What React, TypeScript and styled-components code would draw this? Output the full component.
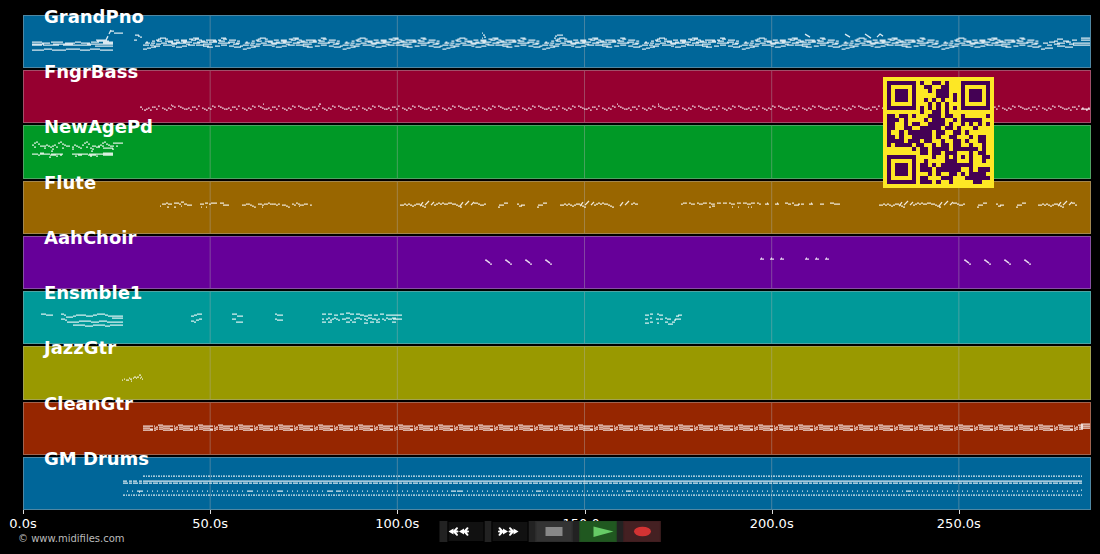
import React from 'react';
import styled, { createGlobalStyle } from 'styled-components';

const GlobalStyle = createGlobalStyle`
  * { box-sizing: border-box; }
  body { margin: 0; background: #000; color: #fff; font-family: "DejaVu Sans", sans-serif; }
`;

/* ---------- note data ---------- */

const DURATION = 285.3;
const WIDTH = 1068;
const HEIGHT = 53;

/** One dash per character: a base-36 digit is the pitch offset below `y`, "-" is a rest. */
const voice = (x: number, y: number, notes: string, step = 2, len = step): string => {
  let d = '';
  for (let i = 0; i < notes.length; i++) {
    const c = notes[i];
    if (c === '-') continue;
    d += `M${x + i * step} ${y + parseInt(c, 36)}h${len}`;
  }
  return d;
};

/** Held notes written as "x y length". */
const held = (list: string, dx = 0): string =>
  list
    .split(',')
    .map((s) => {
      const [x, y, w] = s.trim().split(' ').map(Number);
      return `M${x + dx} ${y}h${w}`;
    })
    .join('');

const repeat = (from: number, to: number, period: number, part: (x: number) => string): string => {
  let d = '';
  for (let x = from; x < to - 0.5; x += period) d += part(x);
  return d;
};

const grandLow = 'cbb-99aa8899-aa88a9988-bb';
const grandBar = (x: number) =>
  held('0 34 4,4 33 4,8 32 5,11 31 6,20 30 9,29 31 3,33 32 6,39 31 5,45 30 7,53 30 8,60 31 6,64 32 6,72 31 5,78 30 6,86 31 5,91 32 7,97 31 3', x) +
  held('2 28 5,8 28 4,14 26 5,18 28 6,25 27 5,29 29 5,36 28 7,45 27 4,50 28 7,59 27 6,64 29 5,70 27 4,75 28 8,85 27 5,90 29 6', x) +
  held('0 30 6,7 30 4,13 29 5,22 26 6,28 28 8,38 26 6,43 29 4,48 25 5,54 27 5,60 29 6,66 27 8,76 26 6,82 28 5,88 27 4,93 28 4', x) +
  held('3 27 2,9 26 3,13 25 3,15 24 3,17 23 6,22 24 3,26 26 4,31 25 5,38 25 6,46 24 4,50 23 6,52 24 4,58 26 4,63 25 5,70 26 4,75 25 3,78 23 5,80 24 4,86 25 6,94 26 3', x) +
  held('33 27 4,40 27 5,56 25 3,68 25 5,91 25 2', x);

const grandPno =
  held('9 27 10,19 28 8,28 27 12,42 28 10,52 27 6,58 28 9,68 27 8,74 26 12,80 28 10,9 29 12,20 30 10,30 29 20,50 30 14,64 29 26,9 30 10,22 30 14,40 30 10,56 30 12,72 31 18,9 35 12,21 34 8,29 35 14,43 34 14,57 35 10,67 34 10,77 35 13') +
  held('73 25 11,80 27 10') +
  'M83 25l2-4M86 19l2-4M88 16h3' +
  held('91 18 9,111 25 3,112 20 4,115 21 2,117 22 2') +
  repeat(120, 1018, 99.8, grandBar) +
  voice(1018, 22, grandLow.slice(0, 10), 4, 4) +
  held('1020 28 5,1026 27 6,1034 28 8,1043 27 5,1050 28 8,1031 26 4,1034 24 6,1040 26 6,1049 25 5,1024 30 5,1031 29 6,1046 29 5') +
  held('1058 23 10,1058 25 10,1058 28 10,1058 30 10') +
  held('459 18 1,460 20 2,461 22 2,459 23 1,531 23 2,532 21 2,534 20 6') +
  'M782 19l5 3M822 19l5 3M842 19l6 4M854 22l3-3l3 2';

const bassBar = '3241130-2342301-0123';
const fngrBass =
  held('117 37 2,119 39 1,121 40 2') +
  repeat(123, 1057, 40, (x) => voice(x, 36, bassBar, 2, 1.7)) +
  held('148 35 1,240 34 1,296 34 2,594 34 1,635 34 1,1058 39 10');

const newAgePd =
  voice(9, 17, '3102-4434543-1023-4-5345-3102-44543102344-4', 2) +
  voice(9, 17, '-5--4-6--57-5--6-4--7--56--5-67--5-4-6--7', 2) +
  voice(9, 27, '222311222333423-----22233222333342222', 2) +
  held('9 29 5,17 29 8,28 29 12,50 29 12,66 29 10,80 28 10,80 29 10,80 30 10,80 23 10,90 18 10,26 32 2,52 31 2,67 31 2,28 26 2,68 26 2');

/* A full phrase: two runs of leaps joined by a murmuring middle part. */
const fluteHead = (x: number) =>
  voice(x, 22, '2212123211234', 2) + `M${x + 20} 25l3-4M${x + 25} 24l4-4M${x + 31} 24l3-3`;
const fluteLong = (x: number) =>
  fluteHead(x) +
  voice(x + 34, 21, '32121221122345', 2) +
  `M${x + 60} 25l3-4M${x + 65} 24l4-4M${x + 71} 24l3-3` +
  voice(x + 74, 21, '112332', 2);
const fluteShort = (x: number) =>
  fluteHead(x) + voice(x + 34, 21, '3212122345', 2) + `M${x + 60} 25l3-4M${x + 65} 24l4-4` + held('71 23 2,73 22 2,75 23 3', x);
const fluteTail = (x: number) => held('0 26 2,1 24 3,4 24 2,6 22 4', x);
const fluteDrop = (x: number) => held('0 23 2,2 25 3,4 24 4', x);
const flute =
  held('137 25 1,139 23 4,143 22 2,145 23 4,151 22 5,156 23 2,158 21 3,161 23 3,164 24 5,144 26 2,151 26 2,158 25 1') +
  held('177 23 4,182 22 3,186 23 2,188 22 6,178 26 1,183 26 1,197 22 4,200 24 6') +
  voice(219, 22, '2211234-11211011121-2234-12012211-2', 2, 1.9) +
  held('239 26 1,276 25 1') +
  fluteLong(377) +
  fluteTail(475) +
  fluteDrop(494) +
  fluteTail(514) +
  fluteShort(537) +
  voice(658, 21, '211-122-12211-122-11-11-122-11-112211-12', 2, 1.9) +
  held('686 26 2,689 25 3,709 26 1,715 26 1,725 26 1,728 26 1') +
  held('742 23 4,744 22 1,752 23 4,754 22 1,762 22 3,765 23 3,769 22 2,771 24 5,775 23 2,778 23 3,786 23 4,788 22 1,797 23 4,807 22 4,811 23 6') +
  fluteLong(856) +
  fluteTail(954) +
  fluteDrop(973) +
  fluteTail(993) +
  fluteHead(1015) +
  held('1049 22 3,1052 24 2');

const choirFall = (x: number) => held('0 24 2,5 28 2', x) + `M${x + 1} 24l4 3`;
const choirStep = (x: number) => held('0 23 4,1 22 1', x);
const aahChoir =
  [462, 482, 502, 522, 941, 961, 981, 1001].map(choirFall).join('') +
  [737, 747, 757, 782, 792, 802].map(choirStep).join('');

const ensemble =
  held('18 23 5,23 24 7') +
  held('38 23 3,41 24 2,43 26 7,50 25 3,53 24 10,63 25 7,70 24 4,74 23 8,82 24 3,85 25 15,89 27 11') +
  held('38 28 4,42 29 2,44 31 12,56 30 12,68 31 8,76 30 8,84 31 16') +
  held('50 34 12,62 35 8,70 34 12,82 35 5,87 34 13') +
  held('168 25 3,171 24 3,174 23 5,168 30 3,171 31 2,173 29 3,176 28 3') +
  held('209 23 5,214 25 6,209 28 4,213 31 7,252 23 2,254 24 6,252 28 2,254 29 6') +
  voice(299, 22, '11-11-22-11-0011-11223322-22-11-222222', 2) +
  voice(299, 26, '2-2132123-22113-2112-23112232-23122112', 2) +
  voice(299, 30, '11-11-------11-11----22-11-11------11-', 2) +
  held('368 24 11,370 28 9') +
  held('622 24 4,622 28 3,622 32 4,627 23 3,627 27 2,627 31 3,634 23 2,636 24 4,633 28 3,637 28 3,634 32 2,642 27 2,642 31 3,644 28 4,645 33 5,649 31 3,651 29 2,652 28 6,653 25 3,655 24 4');

const jazzGtr = held('99 34 1,101 33 1,103 34 3,106 32 1,107 33 2,108 35 1,110 32 1,111 31 2,113 32 1,114 31 2,116 29 2,117 32 1,118 31 1,119 33 1');

const cleanBar = (x: number) =>
  held('0 24 10,0 26 7,0 28 10,7 27 3,11 24 1,11 26 2,11 28 2,13 25 2,13 27 2,15 23 5,16 25 4,16 27 4', x);
const cleanGtr = repeat(120, 1058, 20, cleanBar) + held('1058 22 10,1058 24 10,1058 26 10');

const drums =
  repeat(120, 1059, 5, (x) => held('0 19 2,3 19 1', x)) +
  held('100 24 4,106 24 3,110 24 4,116 24 3,120 24 939') +
  repeat(100, 1058, 10, (x) => held('0 26 5,6 26 3', x)) +
  repeat(104, 1058, 5, (x) => held('0 34 1', x)) +
  repeat(100, 1058, 5, (x) => held('0 38 2,3 38 1', x)) +
  held('115 34 4,116 35 1,224 34 5,254 34 5,304 34 5,313 34 5,428 34 5,434 34 5,513 34 5,603 34 5,883 34 5,1058 33 1');

const TRACKS = [
  { name: 'GrandPno', color: '#006699', notes: grandPno },
  { name: 'FngrBass', color: '#960030', notes: fngrBass },
  { name: 'NewAgePd', color: '#009926', notes: newAgePd },
  { name: 'Flute', color: '#996600', notes: flute },
  { name: 'AahChoir', color: '#660099', notes: aahChoir },
  { name: 'Ensmble1', color: '#009999', notes: ensemble },
  { name: 'JazzGtr', color: '#999900', notes: jazzGtr },
  { name: 'CleanGtr', color: '#962600', notes: cleanGtr },
  { name: 'GM Drums', color: '#006699', notes: drums },
];

const TICKS = [0, 50, 100, 150, 200, 250];

const QR = [
  '#######.#..##.#...#######',
  '#.....#..##..##...#.....#',
  '#.###.#...#.###...#.###.#',
  '#.###.#.....###.#.#.###.#',
  '#.###.#..#.#.#..#.#.###.#',
  '#.....#...#.#.#...#.....#',
  '#######.#.#.#.#.#.#######',
  '........#..##.#..........',
  '##.##.#...###.##..#.....#',
  '###.#....#.###..#.#####..',
  '##..#.##..####.#..#.#.#.#',
  '##..##..#####.##.#...#...',
  '#..#.######.##..##.#.....',
  '##.#..#####.#..##...#.##.',
  '####.###.##..#..##.#..##.',
  '#.####.##..#.##.##..#..#.',
  '......#.##.####.######.#.',
  '........##.##.###...#.##.',
  '#######....#..#.#.#.#..##',
  '#.....#..#....###...#..#.',
  '#.###.#.##.#.########....',
  '#.###.#.###.######..#.###',
  '#.###.#...#.#..##.#.####.',
  '#.....#.##...###...######',
  '#######.###.#..#.....##..',
];

/* ---------- layout ---------- */

const Page = styled.main`
  position: relative;
  display: flex;
  flex-direction: column;
  min-height: 100vh;
  padding-bottom: 9px;
`;

const Tracks = styled.section`
  flex: 1;
  display: grid;
  grid-auto-rows: minmax(53px, 1fr);
  gap: 2px;
  margin: 15px 9px 0 23px;
`;

const Track = styled.div<{ $color: string }>`
  position: relative;
  display: grid;
  min-height: 0;
  background: ${(p) => p.$color};
  border: 1px solid rgba(176, 176, 176, 0.45);
`;

const TrackName = styled.h2`
  position: absolute;
  top: -8px;
  left: 20px;
  margin: 0;
  font-size: 18px;
  line-height: 18px;
  font-weight: bold;
  white-space: nowrap;
`;

const Roll = styled.svg`
  display: block;
  width: 100%;
  height: 100%;
  min-height: 0;
`;

const Axis = styled.div`
  display: grid;
  grid-template-columns: repeat(5, 50fr) 35.3fr;
  margin: 0 9px 0 23px;
`;

const Tick = styled.div`
  display: flex;
  flex-direction: column;
  align-items: flex-start;
  width: 0;

  &::before {
    content: "";
    width: 1px;
    height: 4px;
    background: #ddd;
  }
`;

const TickLabel = styled.span`
  margin-top: 1px;
  font-size: 13px;
  line-height: 18px;
  transform: translateX(-50%);
`;

const Copyright = styled.footer`
  padding-left: 18px;
  font-size: 10px;
  line-height: 12px;
  color: #bbb;
`;

const QrCode = styled.svg`
  position: absolute;
  top: 77px;
  right: 106px;
  width: 111px;
  height: 111px;
`;

const Transport = styled.div`
  position: absolute;
  bottom: 12px;
  left: 50%;
  display: flex;
  gap: 7px;
  padding-left: 8px;
  background: #222;
  transform: translateX(-50%);
`;

const TransportButton = styled.button<{ $color: string; $edge: string }>`
  display: flex;
  width: 37px;
  height: 21px;
  padding: 0;
  border: 1px solid ${(p) => p.$edge};
  background: ${(p) => p.$color};

  svg { width: 35px; height: 19px; }
`;

/* Feathered arrow pointing left, drawn twice for the winding buttons. */
const Arrow = ({ x }: { x: number }) => (
  <g transform={`translate(${x} 0)`}>
    <path d="M0 9.500L5 6.500V12.500Z" fill="#fff" />
    <path d="M4 9.500H9M5.500 9.500L8.500 6.200M5.500 9.500L8.500 12.800" stroke="#fff" strokeWidth="2" strokeLinecap="round" fill="none" />
  </g>
);
const Arrows = () => (
  <>
    <Arrow x={0} />
    <Arrow x={10.5} />
  </>
);

const BUTTONS = [
  { label: 'Rewind', color: '#111', edge: '#000', icon: <Arrows /> },
  { label: 'Fast forward', color: '#111', edge: '#000', icon: <g transform="translate(26 0) scale(-1 1)"><Arrows /></g> },
  { label: 'Stop', color: '#333', edge: '#2d2d2d', icon: <rect x="9" y="5" width="17" height="9" fill="#888" /> },
  { label: 'Play', color: '#205820', edge: '#205220', icon: <path d="M13 4.500L33 9.500L13 15Z" fill="#66cc66" /> },
  { label: 'Record', color: '#442022', edge: '#401d1f', icon: <ellipse cx="18" cy="9.500" rx="8.500" ry="4.800" fill="#d33333" /> },
];

export default function App() {
  return (
    <>
      <GlobalStyle />
      <Page>
        <Tracks>
          {TRACKS.map((t) => (
            <Track key={t.name} $color={t.color}>
              <Roll viewBox={`1 1 ${WIDTH - 2} ${HEIGHT - 2}`} preserveAspectRatio="none" aria-hidden="true">
                {TICKS.slice(1).map((s) => (
                  <path key={s} d={`M${(s / DURATION) * WIDTH} 0V${HEIGHT}`} stroke="#b0b0b0" strokeOpacity="0.4" />
                ))}
                <path d={t.notes} fill="none" stroke="#fff" strokeOpacity="0.85" strokeWidth="1.3" />
              </Roll>
              <TrackName>{t.name}</TrackName>
            </Track>
          ))}
        </Tracks>
        <Axis>
          {TICKS.map((s) => (
            <Tick key={s}>
              <TickLabel>{s.toFixed(1)}s</TickLabel>
            </Tick>
          ))}
        </Axis>
        <Copyright>© www.midifiles.com</Copyright>
        <QrCode viewBox="0 0 27 27" role="img" aria-label="QR code" shapeRendering="crispEdges">
          <rect width="27" height="27" fill="#fde725" />
          <path
            fill="#440154"
            d={QR.map((row, y) => [...row].map((c, x) => (c === '#' ? `M${x + 1} ${y + 1}h1v1h-1z` : '')).join('')).join('')}
          />
        </QrCode>
        <Transport>
          {BUTTONS.map((b) => (
            <TransportButton key={b.label} type="button" aria-label={b.label} $color={b.color} $edge={b.edge}>
              <svg viewBox="0 0 35 19">{b.icon}</svg>
            </TransportButton>
          ))}
        </Transport>
      </Page>
    </>
  );
}
